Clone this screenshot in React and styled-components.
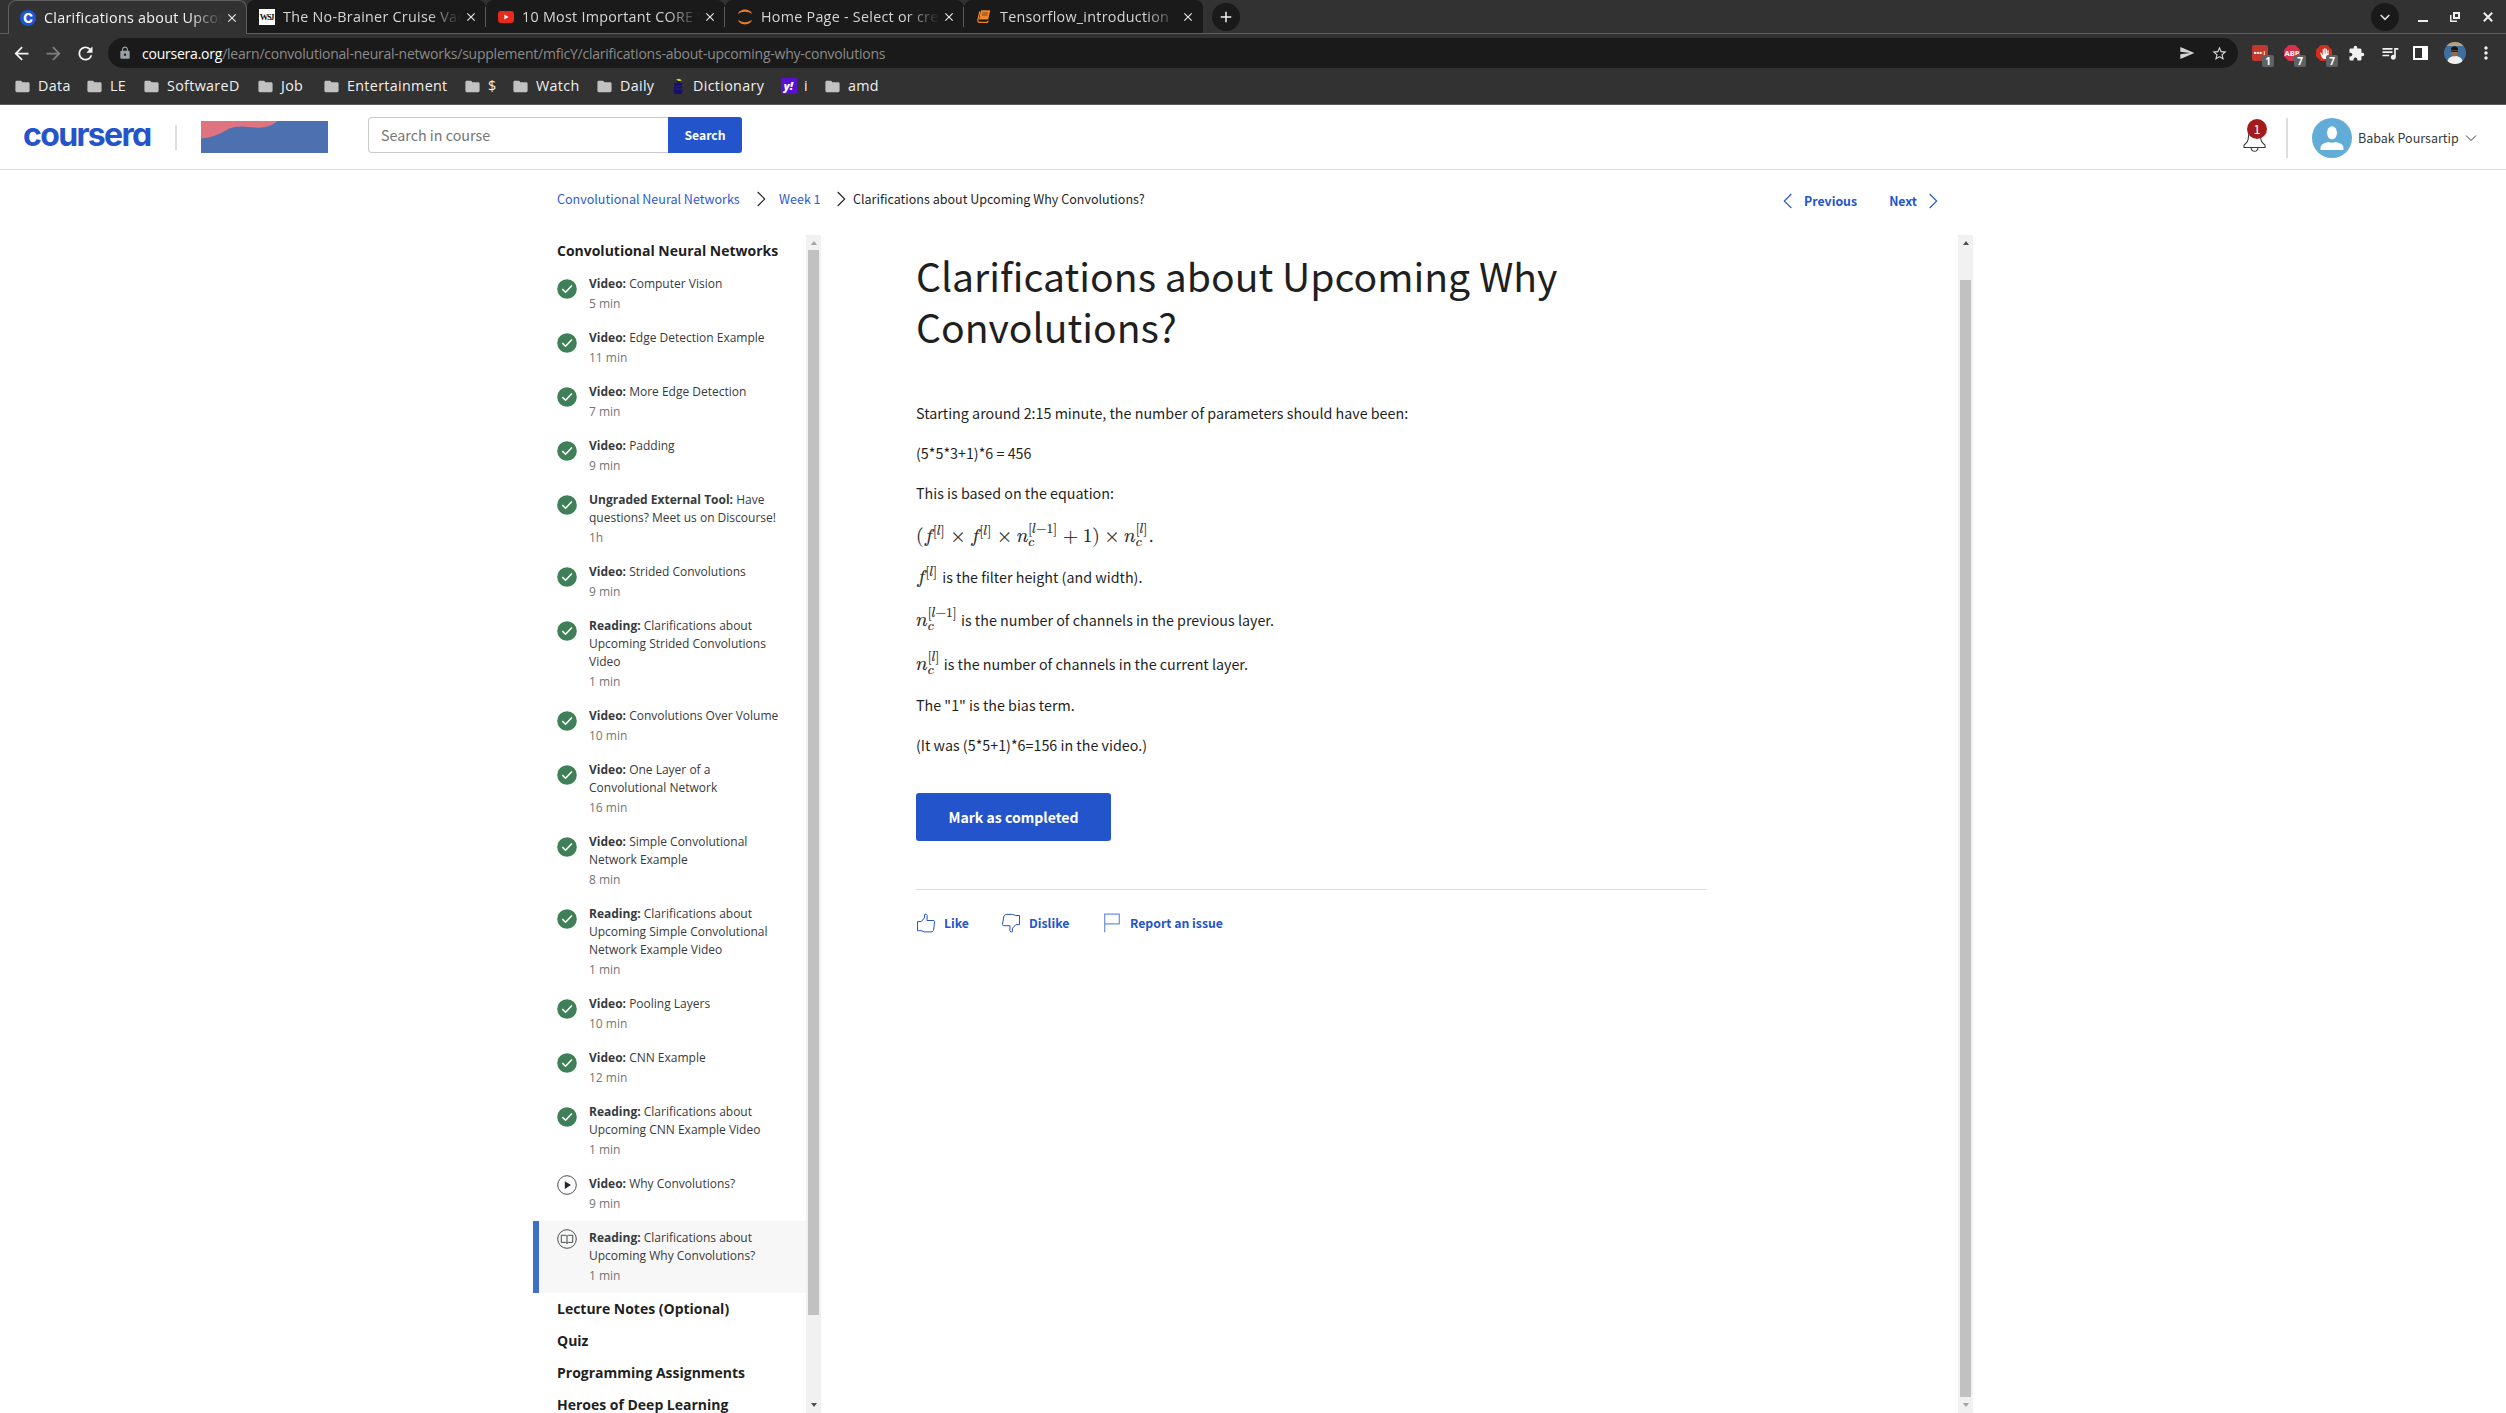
import React from "react";
import styled, { createGlobalStyle, css } from "styled-components";
import {
  MdAdd,
  MdArrowBack,
  MdArrowForward,
  MdClose,
  MdExtension,
  MdFolder,
  MdLock,
  MdMoreVert,
  MdQueueMusic,
  MdRefresh,
  MdSend,
  MdStarBorder,
  MdBackHand,
} from "react-icons/md";

const ui = '"Open Sans", "Noto Sans", sans-serif';
const source = '"Noto Sans CJK SC", "Open Sans", sans-serif';
const math = '"Latin Modern Math", "STIX Two Math", "Liberation Serif", serif';
const blue = "#2454cc";

const GlobalStyle = createGlobalStyle`
  * { box-sizing: border-box; }
  html, body { margin: 0; padding: 0; background: #fff; overflow: hidden; }
  body { font-family: ${source}; color: #1f1f1f; }
  svg { display: block; flex: none; }
  p, h1, ul { margin: 0; padding: 0; }
`;

const Window = styled.div`
  width: 2506px;
  height: 1413px;
  display: flex;
  flex-direction: column;
  overflow: hidden;
`;

/* ---------- browser chrome ---------- */

const Chrome = styled.header`
  height: 105px;
  flex: none;
  background: #323232;
  border-bottom: 1px solid #5c5c5c;
  font-family: ${ui};
  color: #f1f1f1;
`;

const TabStrip = styled.div`
  height: 34px;
  display: flex;
  align-items: flex-start;
  padding-left: 8px;
  border-bottom: 1px solid #5f5f5f;
`;

const TabBox = styled.div`
  position: relative;
  width: 239px;
  height: 33px;
  display: flex;
  align-items: center;
  padding: 0 9px 0 ${(p) => (p.$active ? 11 : 12)}px;
  border-radius: 8px 8px 0 0;
  background: #1a1a1a;
  ${(p) =>
    p.$active &&
    css`
      height: 34px;
      background: #323232;
      border: 1px solid #5f5f5f;
      border-bottom: 0;
      padding-right: 8px;
    `}
`;

const TabSeparator = styled.i`
  position: absolute;
  right: 0;
  top: 7px;
  width: 1px;
  height: 20px;
  background: #5a5a5a;
`;

const TabIcon = styled.span`
  width: 16px;
  height: 16px;
  flex: none;
  display: flex;
  align-items: center;
  justify-content: center;
`;

const TabTitle = styled.span`
  width: 178px;
  flex: none;
  margin-left: 8px;
  overflow: hidden;
  white-space: nowrap;
  font-size: 14.3px;
  letter-spacing: 0.28px;
  line-height: 24px;
  color: ${(p) => (p.$active ? "#f4f4f4" : "#d6d6d6")};
  mask-image: linear-gradient(to right, #000 145px, transparent 178px);
`;

const TabClose = styled.span`
  width: 12px;
  height: 16px;
  margin-left: 4px;
  display: flex;
  align-items: center;
  justify-content: center;
  color: #e8e8e8;
`;

const Round = styled.span`
  width: 28px;
  height: 28px;
  border-radius: 50%;
  background: #1a1a1a;
  display: flex;
  align-items: center;
  justify-content: center;
  margin: 3px 0 0 ${(p) => p.$left}px;
`;

const WindowButtons = styled.div`
  margin-left: auto;
  display: flex;
  padding-right: 13px;
`;

const WindowButton = styled.span`
  width: 10px;
  height: 34px;
  margin-left: ${(p) => p.$left}px;
  display: flex;
  align-items: center;
  justify-content: center;
  color: #ededed;
`;

const Toolbar = styled.div`
  height: 30px;
  margin-top: 4px;
  display: flex;
  align-items: center;
  padding-left: 11px;
`;

const NavButton = styled.span`
  width: 32px;
  flex: none;
  display: flex;
  color: ${(p) => (p.$dim ? "#808080" : "#f4f4f4")};
`;

const Omnibox = styled.div`
  width: 2130px;
  flex: none;
  height: 30px;
  display: flex;
  align-items: center;
  border-radius: 15px;
  background: #1a1a1a;
  padding: 0 10px 0 10px;
  margin-left: 1px;
  color: #9aa0a6;
`;

const Url = styled.span`
  margin-left: 10px;
  flex: 1;
  font-size: 14px;
  letter-spacing: -0.23px;
  color: #8b8b8b;
  b {
    font-weight: 400;
    color: #fff;
  }
`;

const OmniAction = styled.span`
  margin-left: 16px;
  color: #d5d5d5;
`;

const Extensions = styled.div`
  display: flex;
  flex: none;
  align-items: center;
  margin-left: 14px;
  color: #f1f1f1;
`;

const Ext = styled.span`
  position: relative;
  width: 32px;
  height: 16px;
  display: flex;
  align-items: center;
  padding-left: ${(p) => p.$pad || 0}px;
`;

const ExtIcon = styled.span`
  width: 16px;
  height: 16px;
  display: flex;
  align-items: center;
  justify-content: center;
  background: ${(p) => p.$bg};
  font: 700 7.5px/16px ${ui};
  color: #fff;
  border-radius: ${(p) => (p.$round ? 0 : 2)}px;
  ${(p) =>
    p.$round &&
    css`
      clip-path: polygon(30% 0, 70% 0, 100% 30%, 100% 70%, 70% 100%, 30% 100%, 0 70%, 0 30%);
    `}
`;

const ExtCount = styled.span`
  position: absolute;
  left: 10px;
  top: 10px;
  width: 12px;
  height: 12px;
  border-radius: 2px;
  background: #5f6265;
  font: 700 10px/12px ${ui};
  text-align: center;
  color: #fff;
`;

const Bookmarks = styled.div`
  height: 36px;
  display: flex;
  align-items: center;
  padding-left: 14px;
`;

const Bookmark = styled.span`
  width: ${(p) => p.$w}px;
  display: flex;
  align-items: center;
  font-size: 14.3px;
  letter-spacing: 0.33px;
  line-height: 24px;
  white-space: nowrap;
  color: #f0f0f0;
`;

const BookmarkIcon = styled.span`
  width: 17px;
  margin-right: 7px;
  color: #c1c1c1;
  display: flex;
  justify-content: center;
`;

const YahooIcon = styled.span`
  width: 16px;
  height: 16px;
  flex: none;
  background: #5a10d2;
  color: #fff;
  font: italic 800 11px/15px ${ui};
  letter-spacing: 0;
  text-align: center;
`;

const CourseraIcon = styled.span`
  width: 16px;
  height: 16px;
  border-radius: 50%;
  background: #1d55d8;
  color: #fff;
  font: 800 13px/16px Inter, sans-serif;
  text-align: center;
`;

const WsjIcon = styled.span`
  width: 16px;
  height: 16px;
  background: #fff;
  color: #111;
  font: 700 8.5px/16px "Liberation Serif", serif;
  letter-spacing: -1.3px;
  display: flex;
  justify-content: center;
  padding-right: 1px;
`;

/* ---------- site header ---------- */

const SiteHeader = styled.div`
  height: 65px;
  flex: none;
  display: flex;
  align-items: flex-start;
  padding-left: 23px;
  border-bottom: 1px solid #dcdcdc;
`;

const Logo = styled.span`
  width: 152px;
  margin-top: 10px;
  font: 700 32px/40px Inter, sans-serif;
  font-feature-settings: "cv11" 1;
  letter-spacing: -1.65px;
  color: ${blue};
`;

const Divider = styled.i`
  width: 2px;
  height: ${(p) => p.$h}px;
  margin-top: ${(p) => p.$top}px;
  background: #dedede;
`;

const Partner = styled.div`
  margin: 16px 0 0 24px;
  width: 127px;
  height: 32px;
`;

const SearchForm = styled.div`
  display: flex;
  margin: 12px 0 0 40px;
`;

const SearchInput = styled.div`
  width: 300px;
  height: 36px;
  border: 1px solid #c9c9cf;
  border-right: 0;
  border-radius: 4px 0 0 4px;
  padding-left: 12px;
  font-size: 14.3px;
  line-height: 34px;
  color: #757575;
`;

const SearchButton = styled.div`
  width: 74px;
  height: 36px;
  border-radius: 0 3px 3px 0;
  background: ${blue};
  color: #fff;
  font-weight: 700;
  font-size: 12.2px;
  line-height: 36px;
  text-align: center;
`;

const Account = styled.div`
  margin-left: auto;
  display: flex;
  align-items: flex-start;
  padding-right: 29px;
`;

const BellBox = styled.div`
  position: relative;
  width: 43px;
  padding-top: 22px;
`;

const BellCount = styled.span`
  position: absolute;
  left: 4px;
  top: 14px;
  width: 20px;
  height: 20px;
  border-radius: 50%;
  background: #a31b1b;
  color: #fff;
  font: 12.5px/19px ${source};
  text-align: center;
`;

const AvatarBox = styled.div`
  margin: 13px 6px 0 24px;
`;

const UserName = styled.span`
  width: 107px;
  margin-top: 21px;
  font-size: 12.5px;
  line-height: 24px;
  color: #373a3c;
`;

const ChevronBox = styled.span`
  margin-top: 29px;
`;

/* ---------- page ---------- */

const Page = styled.main`
  width: 1440px;
  flex: 1;
  margin: 0 auto;
  display: flex;
  flex-direction: column;
  min-height: 0;
`;

const TopNav = styled.nav`
  height: 65px;
  flex: none;
  display: flex;
  padding: 16px 35px 0 24px;
  font-size: 12.54px;
  line-height: 26px;
  white-space: nowrap;
`;

const Crumb = styled.span`
  width: ${(p) => p.$w}px;
  color: ${(p) => (p.$link ? "#2d5bd3" : "#1f1f1f")};
`;

const CrumbArrow = styled.span`
  width: ${(p) => p.$w}px;
  padding-top: 5px;
`;

const Pager = styled.div`
  margin: 2px 0 0 auto;
  display: flex;
  color: ${blue};
  font-weight: 700;
  font-size: 12.3px;
  line-height: 26px;
`;

const PagerArrow = styled.span`
  padding-top: 5px;
`;

const PagerLabel = styled.span`
  width: ${(p) => p.$w}px;
  text-align: ${(p) => p.$align || "left"};
`;

const Body = styled.div`
  flex: 1;
  min-height: 0;
  display: flex;
`;

const Sidebar = styled.aside`
  width: 273px;
  overflow: hidden;
  font-family: ${ui};
`;

const Lesson = styled.div`
  height: 32px;
  padding-left: 24px;
  font-weight: 700;
  font-size: 14px;
  line-height: 32px;
  letter-spacing: -0.01px;
  color: #1f1f1f;
  white-space: nowrap;
`;

const Item = styled.div`
  display: flex;
  padding: 8px 0 8px ${(p) => (p.$current ? 18 : 24)}px;
  ${(p) =>
    p.$current &&
    css`
      background: #f7f7f7;
      border-left: 6px solid #3f70c6;
    `}
`;

const ItemIcon = styled.span`
  width: 32px;
  padding-top: ${(p) => (p.$pending ? 0 : 4)}px;
`;

const ItemText = styled.div`
  width: 196px;
  font-size: 12px;
  line-height: 18px;
  color: #373a3c;
`;

const ItemMeta = styled.div`
  line-height: 20px;
  color: #757575;
  padding-top: 1px;
  height: 20px;
`;

const Scroll = styled.div`
  width: 15px;
  flex: none;
  background: #f1f1f1;
  display: flex;
  flex-direction: column;
  align-items: center;
`;

const ScrollArrow = styled.i`
  width: 0;
  height: 0;
  margin: ${(p) => (p.$down ? "auto 0 6px" : "6px 0 0")};
  border: 3.5px solid transparent;
  border-${(p) => (p.$down ? "top" : "bottom")}: 4px solid ${(p) => (p.$dim ? "#a3a3a3" : "#505050")};
  border-${(p) => (p.$down ? "bottom" : "top")}: 0;
`;

const Thumb = styled.i`
  width: 11px;
  height: ${(p) => p.$h}px;
  margin-top: ${(p) => p.$top}px;
  background: #c1c1c1;
`;

const Article = styled.article`
  flex: 1;
  padding: 15px 0 0 95px;
`;

const Title = styled.h1`
  width: 720px;
  font-weight: 400;
  font-size: 39.15px;
  line-height: 51px;
  color: #1f1f1f;
  margin-bottom: 49px;
`;

const Para = styled.p`
  height: 24px;
  margin-top: ${(p) => p.$gap || 16}px;
  font-size: 14.3px;
  line-height: 24px;
  white-space: nowrap;
  color: #1f1f1f;
`;

const Formula = styled.span`
  font-family: ${math};
  font-size: 19.36px;
  line-height: 0;
  -webkit-text-stroke: 0.2px #1f1f1f;
  margin-right: ${(p) => p.$after || 0}px;
`;

const Op = styled.span`
  margin: 0 0.235em;
`;

const Sup = styled.span`
  font-size: 13.5px;
  line-height: 0;
  vertical-align: ${(p) => p.$raise || 7}px;
  margin-right: 1.4px;
`;

const Sub = styled.span`
  display: inline-block;
  width: 0;
  font-size: 13.5px;
  line-height: 0;
  vertical-align: -3.5px;
`;

const Complete = styled.div`
  width: 195px;
  height: 48px;
  margin-top: 36px;
  border-radius: 3px;
  background: ${blue};
  color: #fff;
  font-weight: 700;
  font-size: 14.04px;
  line-height: 48px;
  text-align: center;
`;

const Feedback = styled.div`
  width: 791px;
  margin-top: 48px;
  border-top: 1px solid #dcdcdc;
  display: flex;
  padding: 20px 0 0 0;
  color: ${blue};
  font-weight: 700;
  font-size: 12.28px;
  line-height: 26px;
`;

const FeedbackAction = styled.span`
  width: ${(p) => p.$w}px;
  display: flex;
`;

const FeedbackIcon = styled.span`
  width: 28px;
  padding-top: 3px;
`;

/* ---------- drawings ---------- */

const Chevron = ({ dir = "right", color = "#1f1f1f" }) => (
  <svg width="9" height="16" viewBox="0 0 9 16" fill="none" stroke={color} strokeWidth="1.1">
    <path d={dir === "right" ? "M.7 1 7.7 8 .7 15" : "M8.3 1 1.3 8 8.3 15"} />
  </svg>
);

const Done = () => (
  <svg width="20" height="20" viewBox="0 0 20 20">
    <circle cx="10" cy="10" r="9.8" fill="#3f8058" />
    <path d="M5.3 10.1 8.6 13.3 14.9 6.6" fill="none" stroke="#fff" strokeWidth="1.5" />
  </svg>
);

const Play = () => (
  <svg width="20" height="20" viewBox="0 0 20 20">
    <circle cx="10" cy="10" r="9.3" fill="#fff" stroke="#373a3c" strokeWidth=".9" />
    <path d="M7.8 6.2 14 10 7.8 13.9z" fill="#23272f" />
  </svg>
);

const Book = () => (
  <svg width="20" height="20" viewBox="0 0 20 20" fill="none" stroke="#373a3c" strokeWidth=".9">
    <circle cx="10" cy="10" r="9.3" />
    <path d="M4.3 6.3H8.6L10 7.2 11.4 6.3H15.7V13.4H11.4L10 14.4 8.6 13.4H4.3zM10 7.2V14.4" />
  </svg>
);

const ThumbUp = () => (
  <svg width="20" height="20" viewBox="0 0 20 20" fill="none" stroke={blue} strokeWidth="1">
    <path d="M1.5 8.6H5.2L8.4 5 8.7 1.5 9.9 1 11.2 2.6 11 7.5H17.9L18.6 8.5 17.6 17.2 16 18.9H8.4L5.2 17.7H1.5z" />
  </svg>
);

const ThumbDown = () => (
  <svg width="20" height="20" viewBox="0 0 20 20" fill="none" stroke={blue} strokeWidth="1">
    <path d="M18.5 11.6H14.8L11.6 15.2 11.3 18.7 10.1 19.2 8.8 17.6 9 12.7H2.1L1.4 11.7 2.9 3 4.5 1.4H11.6L14.8 2.5H18.5z" />
  </svg>
);

const Flag = () => (
  <svg width="20" height="20" viewBox="0 0 20 20" fill="none" stroke="#6c8ee0" strokeWidth="1.2">
    <path d="M2.7 19.3V1.2H17.3V10.8H2.7" />
  </svg>
);

const Bell = () => (
  <svg width="24" height="26" viewBox="0 0 24 26" fill="none" stroke="#373a3c" strokeWidth="1.1">
    <path d="M5.5 9C5.5 5 8 2 11.5 2S17.5 5 17.5 9C17.5 14 19 15.500 22 18.200V20.500H1V18.200C4 15.500 5.500 14 5.500 9z" />
    <path d="M8 20.700C8.300 23 9.600 24.300 11.500 24.300S14.700 23 15 20.700" />
  </svg>
);

const Person = () => (
  <svg width="40" height="40" viewBox="0 0 40 40">
    <circle cx="20" cy="20" r="20" fill="#62acd8" />
    <ellipse cx="20" cy="14.800" rx="5" ry="6.500" fill="#fff" />
    <path d="M8.500 32C8 27 10.500 25 16.500 24Q20 25.500 23.500 24C29.500 25 32 27 31.500 32z" fill="#fff" />
  </svg>
);

const PartnerArt = () => (
  <svg width="127" height="32" viewBox="0 0 127 32">
    <rect width="127" height="32" fill="#4d70b0" />
    <path d="M0 0H76C70 6 62 7.500 50 6.200C38 5 32 5 24 10C16 14.500 8 17 0 17.500z" fill="#de747f" />
  </svg>
);

const Photo = () => (
  <svg width="22" height="22" viewBox="0 0 22 22">
    <clipPath id="face"><circle cx="11" cy="11" r="11" /></clipPath>
    <g clipPath="url(#face)">
      <rect width="22" height="22" fill="#3f6f9d" />
      <rect width="22" height="4" fill="#b9a27a" />
      <path d="M3 22C3 16 7 14 11 14S19 16 19 22z" fill="#f0eeee" />
      <ellipse cx="10.500" cy="9.500" rx="3.400" ry="5" fill="#9a6a50" />
      <path d="M7 8C6.500 3 14.500 3 14 8z" fill="#1b1714" />
      <path d="M7.200 8.400H14V10H7.200z" fill="#221c1c" />
    </g>
  </svg>
);

const YouTube = () => (
  <svg width="16" height="12" viewBox="0 0 16 12">
    <rect width="16" height="12" rx="3" fill="#e8291c" />
    <path d="M6.300 3.500 10.500 6 6.300 8.500z" fill="#fff" />
  </svg>
);

const Jupyter = () => (
  <svg width="16" height="16" viewBox="0 0 16 16" fill="#e77b2e">
    <path d="M1 5.200C2.500-1 13.500-1 15 5.200C11 2 5 2 1 5.200z" />
    <path d="M1 10.800C2.500 17 13.500 17 15 10.800C11 14 5 14 1 10.800z" />
  </svg>
);

const Notebook = () => (
  <svg width="14" height="13" viewBox="0 0 14 13">
    <path d="M4 .3H13.300L11.200 9.500H2z" fill="#f0842c" />
    <path d="M2.800 1.500 .8 10.200Q.7 12.300 2.600 12.400H10.300L11.300 10.800" fill="none" stroke="#f0842c" strokeWidth="1.200" />
    <path d="M5.400 3H11M4.900 5H10.500" stroke="#7a3c0c" strokeWidth=".9" />
  </svg>
);

const Ship = () => (
  <svg width="10" height="17" viewBox="0 0 10 17">
    <path d="M3 1.500 6 .8 9 2.200 6 3.200z" fill="#e7d81c" />
    <path d="M1 5H4V3H7V5H9V12H10L8.500 16H2L0 12H1z" fill="#17106f" />
    <path d="M1 8H9M1 11H9" stroke="#2c2b55" strokeWidth=".8" />
  </svg>
);

/* ---------- data ---------- */

const tabs = [
  { title: "Clarifications about Upcoming", icon: <CourseraIcon>C</CourseraIcon> },
  { title: "The No-Brainer Cruise Vacation", icon: <WsjIcon>WSJ</WsjIcon> },
  { title: "10 Most Important CORE Values", icon: <YouTube /> },
  { title: "Home Page - Select or create", icon: <Jupyter /> },
  { title: "Tensorflow_introduction", icon: <Notebook /> },
];

const folder = <MdFolder size={17} />;
const bookmarks = [
  ["Data", 72, folder],
  ["LE", 57, folder],
  ["SoftwareD", 114, folder],
  ["Job", 66, folder],
  ["Entertainment", 141, folder],
  ["$", 48, folder],
  ["Watch", 84, folder],
  ["Daily", 73, folder],
  ["Dictionary", 111, <Ship />],
  ["i", 44, <YahooIcon>y!</YahooIcon>],
  ["amd", 80, folder],
];

const items = [
  ["Video:", "Computer Vision", "5 min"],
  ["Video:", "Edge Detection Example", "11 min"],
  ["Video:", "More Edge Detection", "7 min"],
  ["Video:", "Padding", "9 min"],
  ["Ungraded External Tool:", "Have questions? Meet us on Discourse!", "1h"],
  ["Video:", "Strided Convolutions", "9 min"],
  ["Reading:", "Clarifications about Upcoming Strided Convolutions Video", "1 min"],
  ["Video:", "Convolutions Over Volume", "10 min"],
  ["Video:", "One Layer of a Convolutional Network", "16 min"],
  ["Video:", "Simple Convolutional Network Example", "8 min"],
  ["Reading:", "Clarifications about Upcoming Simple Convolutional Network Example Video", "1 min"],
  ["Video:", "Pooling Layers", "10 min"],
  ["Video:", "CNN Example", "12 min"],
  ["Reading:", "Clarifications about Upcoming CNN Example Video", "1 min"],
  ["Video:", "Why Convolutions?", "9 min", "play"],
  ["Reading:", "Clarifications about Upcoming Why Convolutions?", "1 min", "current"],
];

const FL = () => (
  <>
    𝑓<Sup>[𝑙]</Sup>
  </>
);

const NC = ({ children }) => (
  <>
    𝑛<Sub>𝑐</Sub>
    <Sup $raise={9.5}>{children}</Sup>
  </>
);

const BrowserChrome = () => (
  <Chrome>
    <TabStrip>
      {tabs.map((tab, i) => (
        <TabBox key={tab.title} $active={i === 0}>
          <TabIcon>{tab.icon}</TabIcon>
          <TabTitle $active={i === 0}>{tab.title}</TabTitle>
          <TabClose>
            <MdClose size={14} />
          </TabClose>
          {i > 0 && i < 4 && <TabSeparator />}
        </TabBox>
      ))}
      <Round $left={9}>
        <MdAdd size={18} />
      </Round>
      <WindowButtons>
        <Round $left={0}>
          <svg width="10" height="7" viewBox="0 0 10 7" fill="none" stroke="#ddd" strokeWidth="1.700">
            <path d="M.7 1 5 5.300 9.300 1" />
          </svg>
        </Round>
        <WindowButton $left={19}>
          <svg width="10" height="10" viewBox="0 0 10 10">
            <path d="M0 8H10V10H0z" fill="currentColor" />
          </svg>
        </WindowButton>
        <WindowButton $left={22}>
          <svg width="10" height="10" viewBox="0 0 10 10" fill="none" stroke="currentColor">
            <path d="M4 1H9V6H4z" strokeWidth="2" />
            <path d="M.75 3V9.250H7" strokeWidth="1.500" />
          </svg>
        </WindowButton>
        <WindowButton $left={23}>
          <svg width="10" height="10" viewBox="0 0 10 10" stroke="currentColor" strokeWidth="2">
            <path d="M.8 .8 9.200 9.200M9.200 .8 .8 9.200" />
          </svg>
        </WindowButton>
      </WindowButtons>
    </TabStrip>
    <Toolbar>
      <NavButton><MdArrowBack size={21} /></NavButton>
      <NavButton $dim><MdArrowForward size={21} /></NavButton>
      <NavButton><MdRefresh size={21} /></NavButton>
      <Omnibox>
        <MdLock size={14} />
        <Url>
          <b>coursera.org</b>
          /learn/convolutional-neural-networks/supplement/mficY/clarifications-about-upcoming-why-convolutions
        </Url>
        <OmniAction><MdSend size={16} /></OmniAction>
        <OmniAction><MdStarBorder size={17} /></OmniAction>
      </Omnibox>
      <Extensions>
        <Ext>
          <ExtIcon $bg="#c0392f">•••|</ExtIcon>
          <ExtCount>1</ExtCount>
        </Ext>
        <Ext>
          <ExtIcon $bg="#d9304c" $round>ABP</ExtIcon>
          <ExtCount>7</ExtCount>
        </Ext>
        <Ext>
          <ExtIcon $bg="#d32d22" $round><MdBackHand size={11} /></ExtIcon>
          <ExtCount>7</ExtCount>
        </Ext>
        <Ext><MdExtension size={17} /></Ext>
        <Ext><MdQueueMusic size={20} /></Ext>
        <Ext $pad={1}>
          <svg width="15" height="14" viewBox="0 0 15 14">
            <path d="M0 0H15V14H0zM2 2V12H9V2z" fill="#fff" fillRule="evenodd" />
          </svg>
        </Ext>
        <Ext><Photo /></Ext>
        <Ext><MdMoreVert size={20} /></Ext>
      </Extensions>
    </Toolbar>
    <Bookmarks>
      {bookmarks.map(([name, w, icon]) => (
        <Bookmark key={name} $w={w}>
          <BookmarkIcon>{icon}</BookmarkIcon>
          {name}
        </Bookmark>
      ))}
    </Bookmarks>
  </Chrome>
);

export default function App() {
  return (
    <Window>
      <GlobalStyle />
      <BrowserChrome />
      <SiteHeader>
        <Logo>coursera</Logo>
        <Divider $h={25} $top={20} />
        <Partner><PartnerArt /></Partner>
        <SearchForm>
          <SearchInput>Search in course</SearchInput>
          <SearchButton>Search</SearchButton>
        </SearchForm>
        <Account>
          <BellBox>
            <Bell />
            <BellCount>1</BellCount>
          </BellBox>
          <Divider $h={40} $top={13} />
          <AvatarBox><Person /></AvatarBox>
          <UserName>Babak Poursartip</UserName>
          <ChevronBox>
            <svg width="12" height="8" viewBox="0 0 12 8" fill="none" stroke="#373a3c" strokeWidth="1">
              <path d="M1 1.500 6 6.500 11 1.500" />
            </svg>
          </ChevronBox>
        </Account>
      </SiteHeader>
      <Page>
        <TopNav>
          <Crumb $w={200} $link>Convolutional Neural Networks</Crumb>
          <CrumbArrow $w={22}><Chevron /></CrumbArrow>
          <Crumb $w={58} $link>Week 1</Crumb>
          <CrumbArrow $w={16}><Chevron /></CrumbArrow>
          <Crumb $w={300}>Clarifications about Upcoming Why Convolutions?</Crumb>
          <Pager>
            <PagerArrow><Chevron dir="left" color={blue} /></PagerArrow>
            <PagerLabel $w={65} $align="right">Previous</PagerLabel>
            <PagerLabel $w={60} $align="right">Next</PagerLabel>
            <PagerLabel $w={12} />
            <PagerArrow><Chevron color={blue} /></PagerArrow>
          </Pager>
        </TopNav>
        <Body>
          <Sidebar>
            <Lesson>Convolutional Neural Networks</Lesson>
            {items.map(([kind, name, time, state]) => (
              <Item key={name} $current={state === "current"}>
                <ItemIcon $pending={Boolean(state)}>
                  {state === "current" ? <Book /> : state === "play" ? <Play /> : <Done />}
                </ItemIcon>
                <ItemText>
                  <b>{kind}</b> {name}
                  <ItemMeta>{time}</ItemMeta>
                </ItemText>
              </Item>
            ))}
            <Lesson>Lecture Notes (Optional)</Lesson>
            <Lesson>Quiz</Lesson>
            <Lesson>Programming Assignments</Lesson>
            <Lesson>Heroes of Deep Learning</Lesson>
          </Sidebar>
          <Scroll>
            <ScrollArrow $dim />
            <Thumb $h={1065} $top={5} />
            <ScrollArrow $down />
          </Scroll>
          <Article>
            <Title>Clarifications about Upcoming Why Convolutions?</Title>
            <Para>Starting around 2:15 minute, the number of parameters should have been:</Para>
            <Para>(5*5*3+1)*6 = 456</Para>
            <Para>This is based on the equation:</Para>
            <Para $gap={19}>
              <Formula>
                (<FL /><Op>×</Op><FL /><Op>×</Op><NC>[𝑙−1]</NC><Op>+</Op>1)<Op>×</Op><NC>[𝑙]</NC>.
              </Formula>
            </Para>
            <Para $gap={17}>
              <Formula $after={0.6}><FL /></Formula> is the filter height (and width).
            </Para>
            <Para $gap={19}>
              <Formula><NC>[𝑙−1]</NC></Formula> is the number of channels in the previous layer.
            </Para>
            <Para $gap={20}>
              <Formula><NC>[𝑙]</NC></Formula> is the number of channels in the current layer.
            </Para>
            <Para $gap={17}>The "1" is the bias term.</Para>
            <Para>(It was (5*5+1)*6=156 in the video.)</Para>
            <Complete>Mark as completed</Complete>
            <Feedback>
              <FeedbackAction $w={85}>
                <FeedbackIcon><ThumbUp /></FeedbackIcon>Like
              </FeedbackAction>
              <FeedbackAction $w={101}>
                <FeedbackIcon><ThumbDown /></FeedbackIcon>Dislike
              </FeedbackAction>
              <FeedbackAction $w={130}>
                <FeedbackIcon><Flag /></FeedbackIcon>Report an issue
              </FeedbackAction>
            </Feedback>
          </Article>
          <Scroll>
            <ScrollArrow />
            <Thumb $h={1117} $top={35} />
            <ScrollArrow $down $dim />
          </Scroll>
        </Body>
      </Page>
    </Window>
  );
}
